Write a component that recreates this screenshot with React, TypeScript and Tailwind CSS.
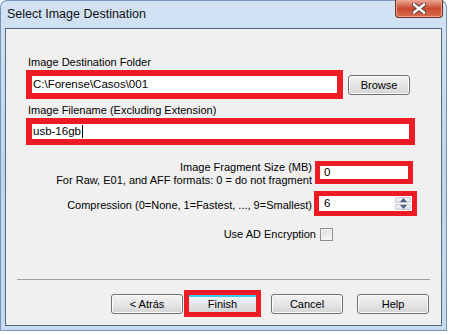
import React from "react";

const btnBase =
  "h-[20px] rounded-[3px] border border-[#707070] bg-gradient-to-b from-[#f2f2f2] via-[#e6e6e6] to-[#d4d4d4] text-center leading-[18px] shadow-[inset_0_0_0_1px_#fcfcfc]";

const SpinArrows = () => (
  <div className="flex h-full w-[16px] flex-col gap-[1px] py-[1px]">
    {["up", "down"].map((d) => (
      <div
        key={d}
        className="flex flex-1 items-center justify-center rounded-[2px] border border-[#c6cbd2] bg-gradient-to-b from-[#f4f5f7] to-[#dfe3e8]"
      >
        <svg width="7" height="4" viewBox="0 0 7 4">
          {d === "up" ? (
            <polygon points="0,4 7,4 3.5,0" fill="#4d6185" />
          ) : (
            <polygon points="0,0 7,0 3.5,4" fill="#4d6185" />
          )}
        </svg>
      </div>
    ))}
  </div>
);

export default function App() {
  return (
    <div className="h-[335px] w-[451px] bg-white font-['Liberation_Sans',Arial,sans-serif] text-[11px] text-black">
      <div className="flex h-[331px] w-[447px] flex-col rounded-t-[7px] bg-gradient-to-b from-[#d3e3f4] via-[#bed5ee] to-[#c6daf0] px-[5px] pb-[5px] shadow-[inset_0_0_0_1px_#7894b8]">
        {/* title bar */}
        <div className="flex h-[28px] items-start justify-between">
          <span className="pl-[2px] pt-[7px] text-[12.5px] leading-[14px] text-[#111]">
            Select Image Destination
          </span>
          <div className="mr-[-1px] flex h-[18px] w-[48px] items-center justify-center rounded-b-[4px] border border-t-0 border-[#6e2f22] bg-gradient-to-b from-[#e7a696] via-[#c9492f] to-[#d66c4e] shadow-[inset_0_0_0_1px_#eaa48f]">
            <svg width="14" height="11" viewBox="0 0 14 11">
              <path d="M2 1.5 L12 9.5 M12 1.5 L2 9.5" stroke="#5a3a35" strokeWidth="4.5" strokeLinecap="round" />
              <path d="M2 1.5 L12 9.5 M12 1.5 L2 9.5" stroke="#ffffff" strokeWidth="2.6" strokeLinecap="round" />
            </svg>
          </div>
        </div>

        {/* client area */}
        <div className="flex flex-1 flex-col border border-[#56677e] bg-[#f0f0f0]">
          <div className="pl-[20px] pt-[26px]">
            <div className="ml-[2px] leading-[14px]">Image Destination Folder</div>
            <div className="mt-[1px] flex items-center">
              <div className="flex h-[29px] w-[317px] items-center border-[6px] border-[#ed1c24] bg-white pl-[1px] text-[11.5px]">
                C:\Forense\Casos\001
              </div>
              <div className={btnBase + " ml-[5px] w-[62px]"}>Browse</div>
            </div>

            <div className="ml-[2px] mt-[4px] leading-[14px]">
              Image Filename (Excluding Extension)
            </div>
            <div className="mt-[1px] flex h-[27px] w-[389px] items-center border-[6px] border-[#ed1c24] bg-white pl-[1px] text-[11.5px]">
              usb-16gb
              <span className="ml-[1px] h-[13px] w-px bg-black" />
            </div>
          </div>

          <div className="mt-[16px] flex h-[23px] justify-end pr-[28px]">
            <div className="text-right leading-[13px]">
              Image Fragment Size (MB)
              <br />
              For Raw, E01, and AFF formats: 0 = do not fragment
            </div>
            <div className="ml-[3px] flex h-[23px] w-[98px] items-center border-[5px] border-[#ed1c24] bg-white pl-[4px] text-[11.5px]">
              0
            </div>
          </div>

          <div className="mt-[7px] flex items-start justify-end pr-[24px]">
            <div className="mt-[7px] leading-[14px]">
              Compression (0=None, 1=Fastest, ..., 9=Smallest)
            </div>
            <div className="ml-[2px] flex h-[25px] w-[103px] items-center border-[5px] border-[#ed1c24] bg-white pl-[5px] pr-[1px] text-[11.5px]">
              <span className="flex-1">6</span>
              <SpinArrows />
            </div>
          </div>

          <div className="mt-[11px] flex items-center justify-end pr-[108px]">
            <span className="leading-[14px]">Use AD Encryption</span>
            <div className="ml-[4px] h-[13px] w-[13px] border border-[#8f8f8f] bg-gradient-to-br from-[#dcdcdc] to-[#fafafa] shadow-[inset_0_0_0_1px_#f4f4f4]" />
          </div>

          <div className="mx-[11px] mt-[38px] h-px bg-[#a0a0a0]" />

          <div className="ml-[105px] mt-[10px] flex items-start">
            <div className={btnBase + " mt-[4px] w-[72px]"}>&lt; Atrás</div>
            <div className="ml-[1px] flex h-[27px] w-[77px] border-[5px] border-[#ed1c24] bg-[#ed1c24]">
              <div className="h-full w-full border-t-[2px] border-[#3cc7f5] bg-gradient-to-b from-[#eaf6fd] via-[#e2e4e6] to-[#d4d6d8] text-center leading-[15px]">
                Finish
              </div>
            </div>
            <div className={btnBase + " ml-[10px] mt-[4px] w-[72px]"}>Cancel</div>
            <div className={btnBase + " ml-[14px] mt-[4px] w-[72px]"}>Help</div>
          </div>
        </div>
      </div>
    </div>
  );
}
